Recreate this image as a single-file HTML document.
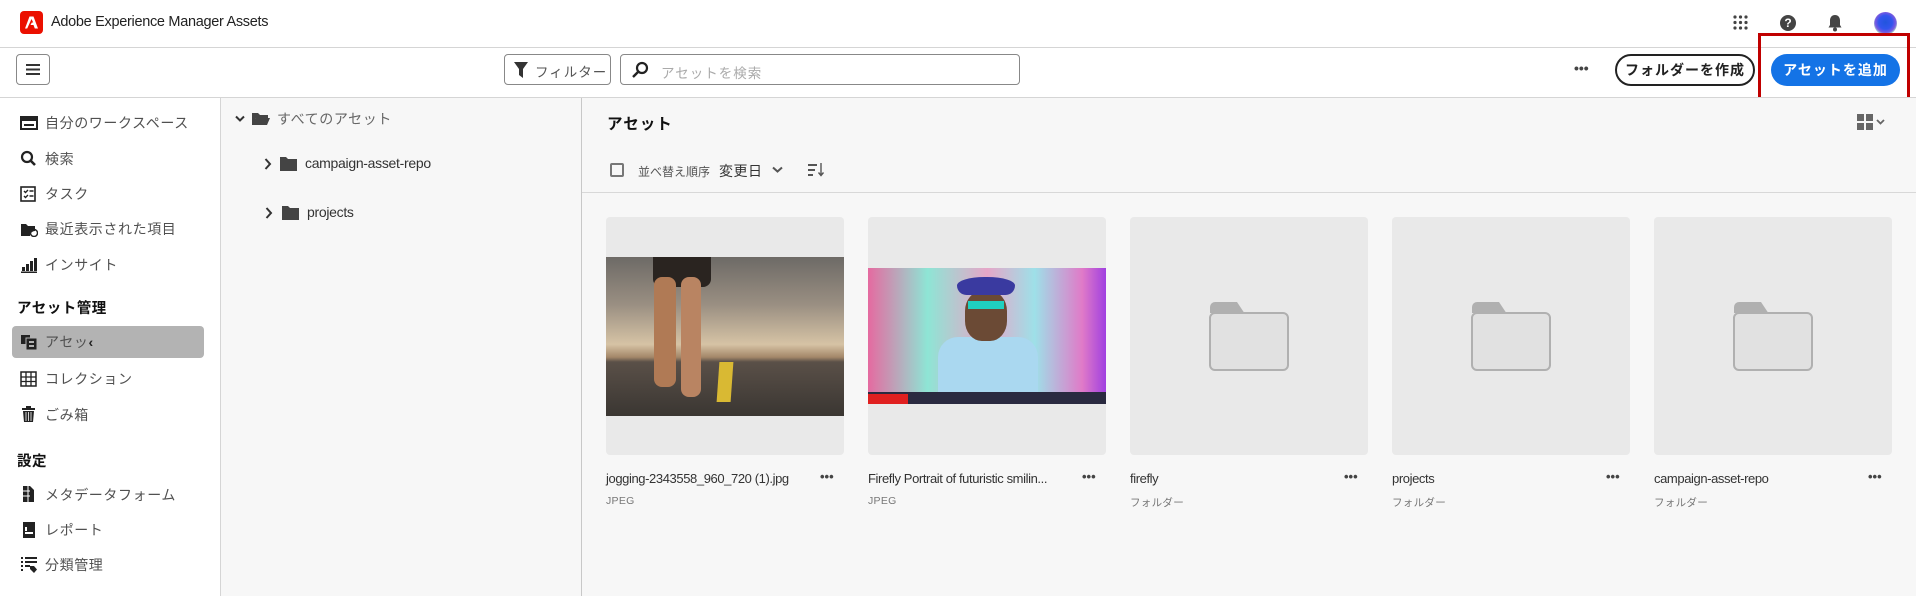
<!DOCTYPE html>
<html><head><meta charset="utf-8"><style>
*{box-sizing:border-box;margin:0;padding:0}
body{width:1916px;height:596px;overflow:hidden;background:#fff;font-family:"Liberation Sans","Noto Sans CJK JP",sans-serif;color:#222;position:relative}
.a{position:absolute}
.hl{position:absolute;left:0;width:1916px;height:1px;background:#d5d5d5}
.side{font-size:14px;color:#505050;letter-spacing:0.6px}
.side .it{position:absolute;left:45px;height:20px;line-height:20px}
.ic{position:absolute;left:20px;width:18px;height:16px}
.hd{position:absolute;left:17px;font-size:14.5px;font-weight:bold;color:#111;letter-spacing:0.5px}
.card{position:absolute;top:217px;width:238px;height:238px;background:#e9e9e9;border-radius:4px;overflow:hidden}
.nm{position:absolute;top:471px;font-size:13px;letter-spacing:-0.4px;color:#333;white-space:nowrap}
.sub{position:absolute;top:495px;font-size:10.5px;color:#777;letter-spacing:.3px}
.dots{position:absolute;top:469px;font-size:13px;color:#444;font-weight:bold;letter-spacing:0px}
.fold{position:absolute;left:79px;top:84px;width:80px;height:70px}
</style></head><body>
<div class="a" style="left:20px;top:11px;width:23px;height:23px;background:#eb1000;border-radius:4px"></div>
<svg class="a" style="left:24px;top:15px" width="15" height="15" viewBox="0 0 15 15"><path d="M5.5 1.5h4l4.5 12h-3.2l-1.3-3.5H6.5l1.3-2.5h1.4L7.5 4 3.2 13.5H1z" fill="#fff"/></svg>
<div class="a" style="left:51px;top:14px;font-size:14.5px;letter-spacing:-0.3px;color:#222">Adobe Experience Manager Assets</div>
<svg class="a" style="left:1733px;top:15px" width="15" height="15"><g fill="#444"><circle cx="2" cy="2" r="1.6"/><circle cx="7.5" cy="2" r="1.6"/><circle cx="13" cy="2" r="1.6"/><circle cx="2" cy="7.5" r="1.6"/><circle cx="7.5" cy="7.5" r="1.6"/><circle cx="13" cy="7.5" r="1.6"/><circle cx="2" cy="13" r="1.6"/><circle cx="7.5" cy="13" r="1.6"/><circle cx="13" cy="13" r="1.6"/></g></svg>
<div class="a" style="left:1780px;top:15px;width:16px;height:16px;border-radius:50%;background:#444;color:#fff;font-size:12px;font-weight:bold;text-align:center;line-height:16px">?</div>
<svg class="a" style="left:1827px;top:14px" width="16" height="18" viewBox="0 0 16 18"><path d="M8 1c-3 0-5 2.3-5 5.5V11L1.5 13.5h13L13 11V6.5C13 3.3 11 1 8 1z" fill="#444"/><circle cx="8" cy="15.5" r="2" fill="#444"/></svg>
<div class="a" style="left:1874px;top:12px;width:23px;height:23px;border-radius:50%;background:radial-gradient(circle at 50% 45%,#2255dd 0,#3355ee 40%,#7a5ae0 60%,#b5f5c5 75%)"></div>
<div class="hl" style="top:47px"></div>
<div class="a" style="left:16px;top:54px;width:34px;height:31px;border:1px solid #888;border-radius:4px"></div>
<svg class="a" style="left:26px;top:64px" width="14" height="11"><g fill="#333"><rect y="0" width="14" height="2"/><rect y="4.5" width="14" height="2"/><rect y="9" width="14" height="2"/></g></svg>
<div class="a" style="left:504px;top:54px;width:107px;height:31px;border:1px solid #888;border-radius:4px"></div>
<svg class="a" style="left:514px;top:62px" width="14" height="16"><path d="M0 0h14l-5 7v9l-4-3V7z" fill="#333"/></svg>
<div class="a" style="left:535px;top:61px;font-size:13.5px;color:#555;letter-spacing:1px">フィルター</div>
<div class="a" style="left:620px;top:54px;width:400px;height:31px;border:1px solid #888;border-radius:4px"></div>
<svg class="a" style="left:631px;top:61px" width="18" height="18"><circle cx="11" cy="7" r="5" fill="none" stroke="#222" stroke-width="2.2"/><path d="M7.5 10.5L2 16" stroke="#222" stroke-width="2.4"/></svg>
<div class="a" style="left:661px;top:62px;font-size:13.5px;color:#aaa;letter-spacing:1px">アセットを検索</div>
<div class="a" style="left:1574px;top:60px;font-size:14px;font-weight:bold;color:#444">•••</div>
<div class="a" style="left:1615px;top:54px;width:140px;height:32px;border:2px solid #222;border-radius:16px;font-size:14px;font-weight:bold;text-align:center;line-height:28px;letter-spacing:1px;color:#222">フォルダーを作成</div>
<div class="a" style="left:1771px;top:54px;width:129px;height:32px;background:#1473e6;border-radius:16px;font-size:14px;font-weight:bold;text-align:center;line-height:32px;letter-spacing:1px;color:#fff">アセットを追加</div>
<div class="a" style="left:1758px;top:33px;width:152px;height:73px;border:3px solid #c00000"></div>
<div class="hl" style="top:97px"></div>
<div class="side">
<svg class="ic" style="top:115px" viewBox="0 0 18 16"><rect x="1" y="2" width="16" height="12" fill="none" stroke="#222" stroke-width="2"/><rect x="1" y="2" width="16" height="4" fill="#222"/><rect x="4" y="9" width="10" height="2" fill="#222"/></svg>
<div class="it" style="top:113px">自分のワークスペース</div>
<svg class="ic" style="top:150px" viewBox="0 0 18 16"><circle cx="7" cy="7" r="5" fill="none" stroke="#222" stroke-width="2.2"/><path d="M10.5 10.5L15 15" stroke="#222" stroke-width="2.6"/></svg>
<div class="it" style="top:149px">検索</div>
<svg class="ic" style="top:186px" viewBox="0 0 18 16"><rect x="1" y="1" width="14" height="14" fill="none" stroke="#222" stroke-width="1.6"/><path d="M4 5l1.5 1.5L8 4M4 10l1.5 1.5L8 9M9.5 5h4M9.5 10h4" stroke="#222" stroke-width="1.4" fill="none"/></svg>
<div class="it" style="top:184px">タスク</div>
<svg class="ic" style="top:221px" viewBox="0 0 18 16"><path d="M1 3h5l2 2h7v5a5 5 0 0 0-5 5H1z" fill="#222"/><circle cx="14" cy="12" r="3.5" fill="none" stroke="#222" stroke-width="1.4"/></svg>
<div class="it" style="top:219px">最近表示された項目</div>
<svg class="ic" style="top:257px" viewBox="0 0 18 16"><g fill="#222"><rect x="2" y="10" width="3" height="4"/><rect x="6" y="7" width="3" height="7"/><rect x="10" y="4" width="3" height="10"/><rect x="14" y="1" width="3" height="13"/><rect x="1" y="14.5" width="16" height="1.5"/></g></svg>
<div class="it" style="top:255px">インサイト</div>
<div class="hd" style="top:297px">アセット管理</div>
<div class="a" style="left:12px;top:326px;width:192px;height:32px;background:#b3b3b3;border-radius:4px"></div>
<svg class="ic" style="top:334px" viewBox="0 0 18 16"><rect x="1" y="1" width="9" height="9" fill="#222"/><rect x="6" y="4" width="11" height="12" fill="#222" stroke="#b3b3b3" stroke-width="1"/><rect x="9" y="7" width="5" height="2" fill="#b3b3b3"/><rect x="9" y="11" width="5" height="2" fill="#b3b3b3"/></svg>
<div class="it" style="top:332px">アセッ<b style="color:#222">‹</b></div>
<svg class="ic" style="top:371px" viewBox="0 0 18 16"><rect x="1" y="1" width="15" height="14" fill="none" stroke="#222" stroke-width="1.5"/><path d="M6 1v14M11 1v14M1 6h15M1 10.5h15" stroke="#222" stroke-width="1.3"/></svg>
<div class="it" style="top:369px">コレクション</div>
<svg class="ic" style="top:406px" viewBox="0 0 18 16"><path d="M2 2h13v2H2zM6 0h5v2H6zM3 5h11l-1 11H4z" fill="#222"/><path d="M6 6v9M8.5 6v9M11 6v9" stroke="#fff" stroke-width=".8"/></svg>
<div class="it" style="top:405px">ごみ箱</div>
<div class="hd" style="top:450px">設定</div>
<svg class="ic" style="top:486px" viewBox="0 0 18 16"><path d="M3 0h7l4 4v12H3z" fill="#222"/><path d="M3 5h7M3 10h7M8 0v16" stroke="#fff" stroke-width="1"/></svg>
<div class="it" style="top:485px">メタデータフォーム</div>
<svg class="ic" style="top:522px" viewBox="0 0 18 16"><rect x="3" y="0" width="12" height="16" fill="#222"/><rect x="5" y="10" width="8" height="2" fill="#fff"/><rect x="5" y="5" width="2" height="4" fill="#fff"/></svg>
<div class="it" style="top:520px">レポート</div>
<svg class="ic" style="top:557px" viewBox="0 0 18 16"><g fill="#222"><rect x="1" y="0" width="2" height="2"/><rect x="5" y="0" width="12" height="2"/><rect x="1" y="4" width="2" height="2"/><rect x="5" y="4" width="12" height="2"/><rect x="1" y="8" width="2" height="2"/><rect x="5" y="8" width="5" height="2"/><rect x="1" y="12" width="2" height="2"/><path d="M10 9h4l3 3.5-3 3.5-4-4z"/></g></svg>
<div class="it" style="top:555px">分類管理</div>
</div>
<div class="a" style="left:220px;top:98px;width:1px;height:498px;background:#d5d5d5"></div>
<div class="a" style="left:221px;top:98px;width:361px;height:498px;background:#f7f7f7"></div>
<div class="a" style="left:581px;top:98px;width:1px;height:498px;background:#c8c8c8"></div>
<svg class="a" style="left:235px;top:115px" width="10" height="8"><path d="M1 1.5l4 4 4-4" stroke="#333" stroke-width="2" fill="none"/></svg>
<svg class="a" style="left:252px;top:111px" width="18" height="15"><path d="M0 2h6l2 2h8v3H4L2 14H0z" fill="#444"/><path d="M4 7h14l-3 7H1z" fill="#444"/></svg>
<div class="a" style="left:277px;top:109px;font-size:14px;color:#666;letter-spacing:0.6px">すべてのアセット</div>
<svg class="a" style="left:264px;top:158px" width="8" height="12"><path d="M1.5 1l4.5 5-4.5 5" stroke="#333" stroke-width="2" fill="none"/></svg>
<svg class="a" style="left:280px;top:157px" width="17" height="14"><path d="M0 0h6l2 2h9v12H0z" fill="#444"/></svg>
<div class="a" style="left:305px;top:155px;font-size:14px;letter-spacing:-0.3px;color:#333">campaign-asset-repo</div>
<svg class="a" style="left:265px;top:207px" width="8" height="12"><path d="M1.5 1l4.5 5-4.5 5" stroke="#333" stroke-width="2" fill="none"/></svg>
<svg class="a" style="left:282px;top:206px" width="17" height="14"><path d="M0 0h6l2 2h9v12H0z" fill="#444"/></svg>
<div class="a" style="left:307px;top:204px;font-size:14px;letter-spacing:-0.3px;color:#333">projects</div>
<div class="a" style="left:582px;top:98px;width:1334px;height:498px;background:#f7f7f7"></div>
<div class="a" style="left:607px;top:112px;font-size:15.5px;font-weight:bold;color:#111;letter-spacing:1px">アセット</div>
<svg class="a" style="left:1857px;top:114px" width="28" height="16"><g fill="#666"><rect width="7" height="7"/><rect x="9" width="7" height="7"/><rect y="9" width="7" height="7"/><rect x="9" y="9" width="7" height="7"/></g><path d="M20 6l3.5 3.5L27 6" stroke="#666" stroke-width="1.8" fill="none"/></svg>
<div class="a" style="left:610px;top:163px;width:14px;height:14px;border:2px solid #777;border-radius:2px"></div>
<div class="a" style="left:638px;top:163px;font-size:12px;color:#555">並べ替え順序</div>
<div class="a" style="left:719px;top:161px;font-size:14px;color:#333;letter-spacing:0.5px">変更日</div>
<svg class="a" style="left:772px;top:166px" width="11" height="8"><path d="M1 1.5l4.5 4 4.5-4" stroke="#555" stroke-width="2" fill="none"/></svg>
<svg class="a" style="left:808px;top:163px" width="18" height="14"><g fill="#555"><rect y="1" width="9" height="2"/><rect y="6" width="7" height="2"/><rect y="11" width="5" height="2"/></g><path d="M13 0v12M10.5 9.5l2.5 3 2.5-3" stroke="#555" stroke-width="1.4" fill="none"/></svg>
<div class="a" style="left:582px;top:192px;width:1334px;height:1px;background:#d8d8d8"></div>

<div class="card" style="left:606px">
 <div class="a" style="left:0;top:40px;width:238px;height:159px;background:linear-gradient(180deg,#6d6a66 0%,#9a8f82 30%,#d6c3a5 55%,#a38769 63%,#5a5048 66%,#3a3632 100%)"></div>
 <div class="a" style="left:47px;top:40px;width:58px;height:30px;background:#2a2420;border-radius:0 0 8px 8px"></div>
 <div class="a" style="left:48px;top:60px;width:22px;height:110px;background:#b07a55;border-radius:8px"></div>
 <div class="a" style="left:75px;top:60px;width:20px;height:120px;background:#b98462;border-radius:8px"></div>
 <div class="a" style="left:112px;top:145px;width:14px;height:40px;background:#d9b933;transform:skewX(-4deg)"></div>
</div>
<div class="card" style="left:868px">
 <div class="a" style="left:0;top:51px;width:238px;height:136px;background:linear-gradient(90deg,#e56aa0 0%,#8ee5d5 25%,#e6a6c8 50%,#9ee0e8 70%,#e07ac8 90%,#a040e0 100%)"></div>
 <div class="a" style="left:70px;top:120px;width:100px;height:66px;background:#aad8f0;border-radius:20px 20px 0 0"></div>
 <div class="a" style="left:97px;top:74px;width:42px;height:50px;background:#6b4a35;border-radius:40%"></div>
 <div class="a" style="left:89px;top:60px;width:58px;height:18px;background:#3a3aa0;border-radius:50% 50% 10px 10px"></div>
 <div class="a" style="left:100px;top:84px;width:36px;height:8px;background:#20d0c0"></div>
 <div class="a" style="left:0;top:175px;width:238px;height:12px;background:#2a2a40"></div>
 <div class="a" style="left:0;top:177px;width:40px;height:10px;background:#e02020"></div>
</div>
<div class="card" style="left:1130px"><svg class="fold" viewBox="0 0 80 70"><path d="M1 12V6a5 5 0 0 1 5-5h22l8 12z" fill="#b0b0b0"/><rect x="1" y="12" width="78" height="57" rx="5" fill="#e1e1e1" stroke="#b0b0b0" stroke-width="2"/></svg></div>
<div class="card" style="left:1392px"><svg class="fold" viewBox="0 0 80 70"><path d="M1 12V6a5 5 0 0 1 5-5h22l8 12z" fill="#b0b0b0"/><rect x="1" y="12" width="78" height="57" rx="5" fill="#e1e1e1" stroke="#b0b0b0" stroke-width="2"/></svg></div>
<div class="card" style="left:1654px"><svg class="fold" viewBox="0 0 80 70"><path d="M1 12V6a5 5 0 0 1 5-5h22l8 12z" fill="#b0b0b0"/><rect x="1" y="12" width="78" height="57" rx="5" fill="#e1e1e1" stroke="#b0b0b0" stroke-width="2"/></svg></div>

<div class="nm" style="left:606px">jogging-2343558_960_720 (1).jpg</div><div class="dots" style="left:820px">•••</div><div class="sub" style="left:606px">JPEG</div>
<div class="nm" style="left:868px">Firefly Portrait of futuristic smilin...</div><div class="dots" style="left:1082px">•••</div><div class="sub" style="left:868px">JPEG</div>
<div class="nm" style="left:1130px">firefly</div><div class="dots" style="left:1344px">•••</div><div class="sub" style="left:1130px">フォルダー</div>
<div class="nm" style="left:1392px">projects</div><div class="dots" style="left:1606px">•••</div><div class="sub" style="left:1392px">フォルダー</div>
<div class="nm" style="left:1654px">campaign-asset-repo</div><div class="dots" style="left:1868px">•••</div><div class="sub" style="left:1654px">フォルダー</div>
</body></html>
